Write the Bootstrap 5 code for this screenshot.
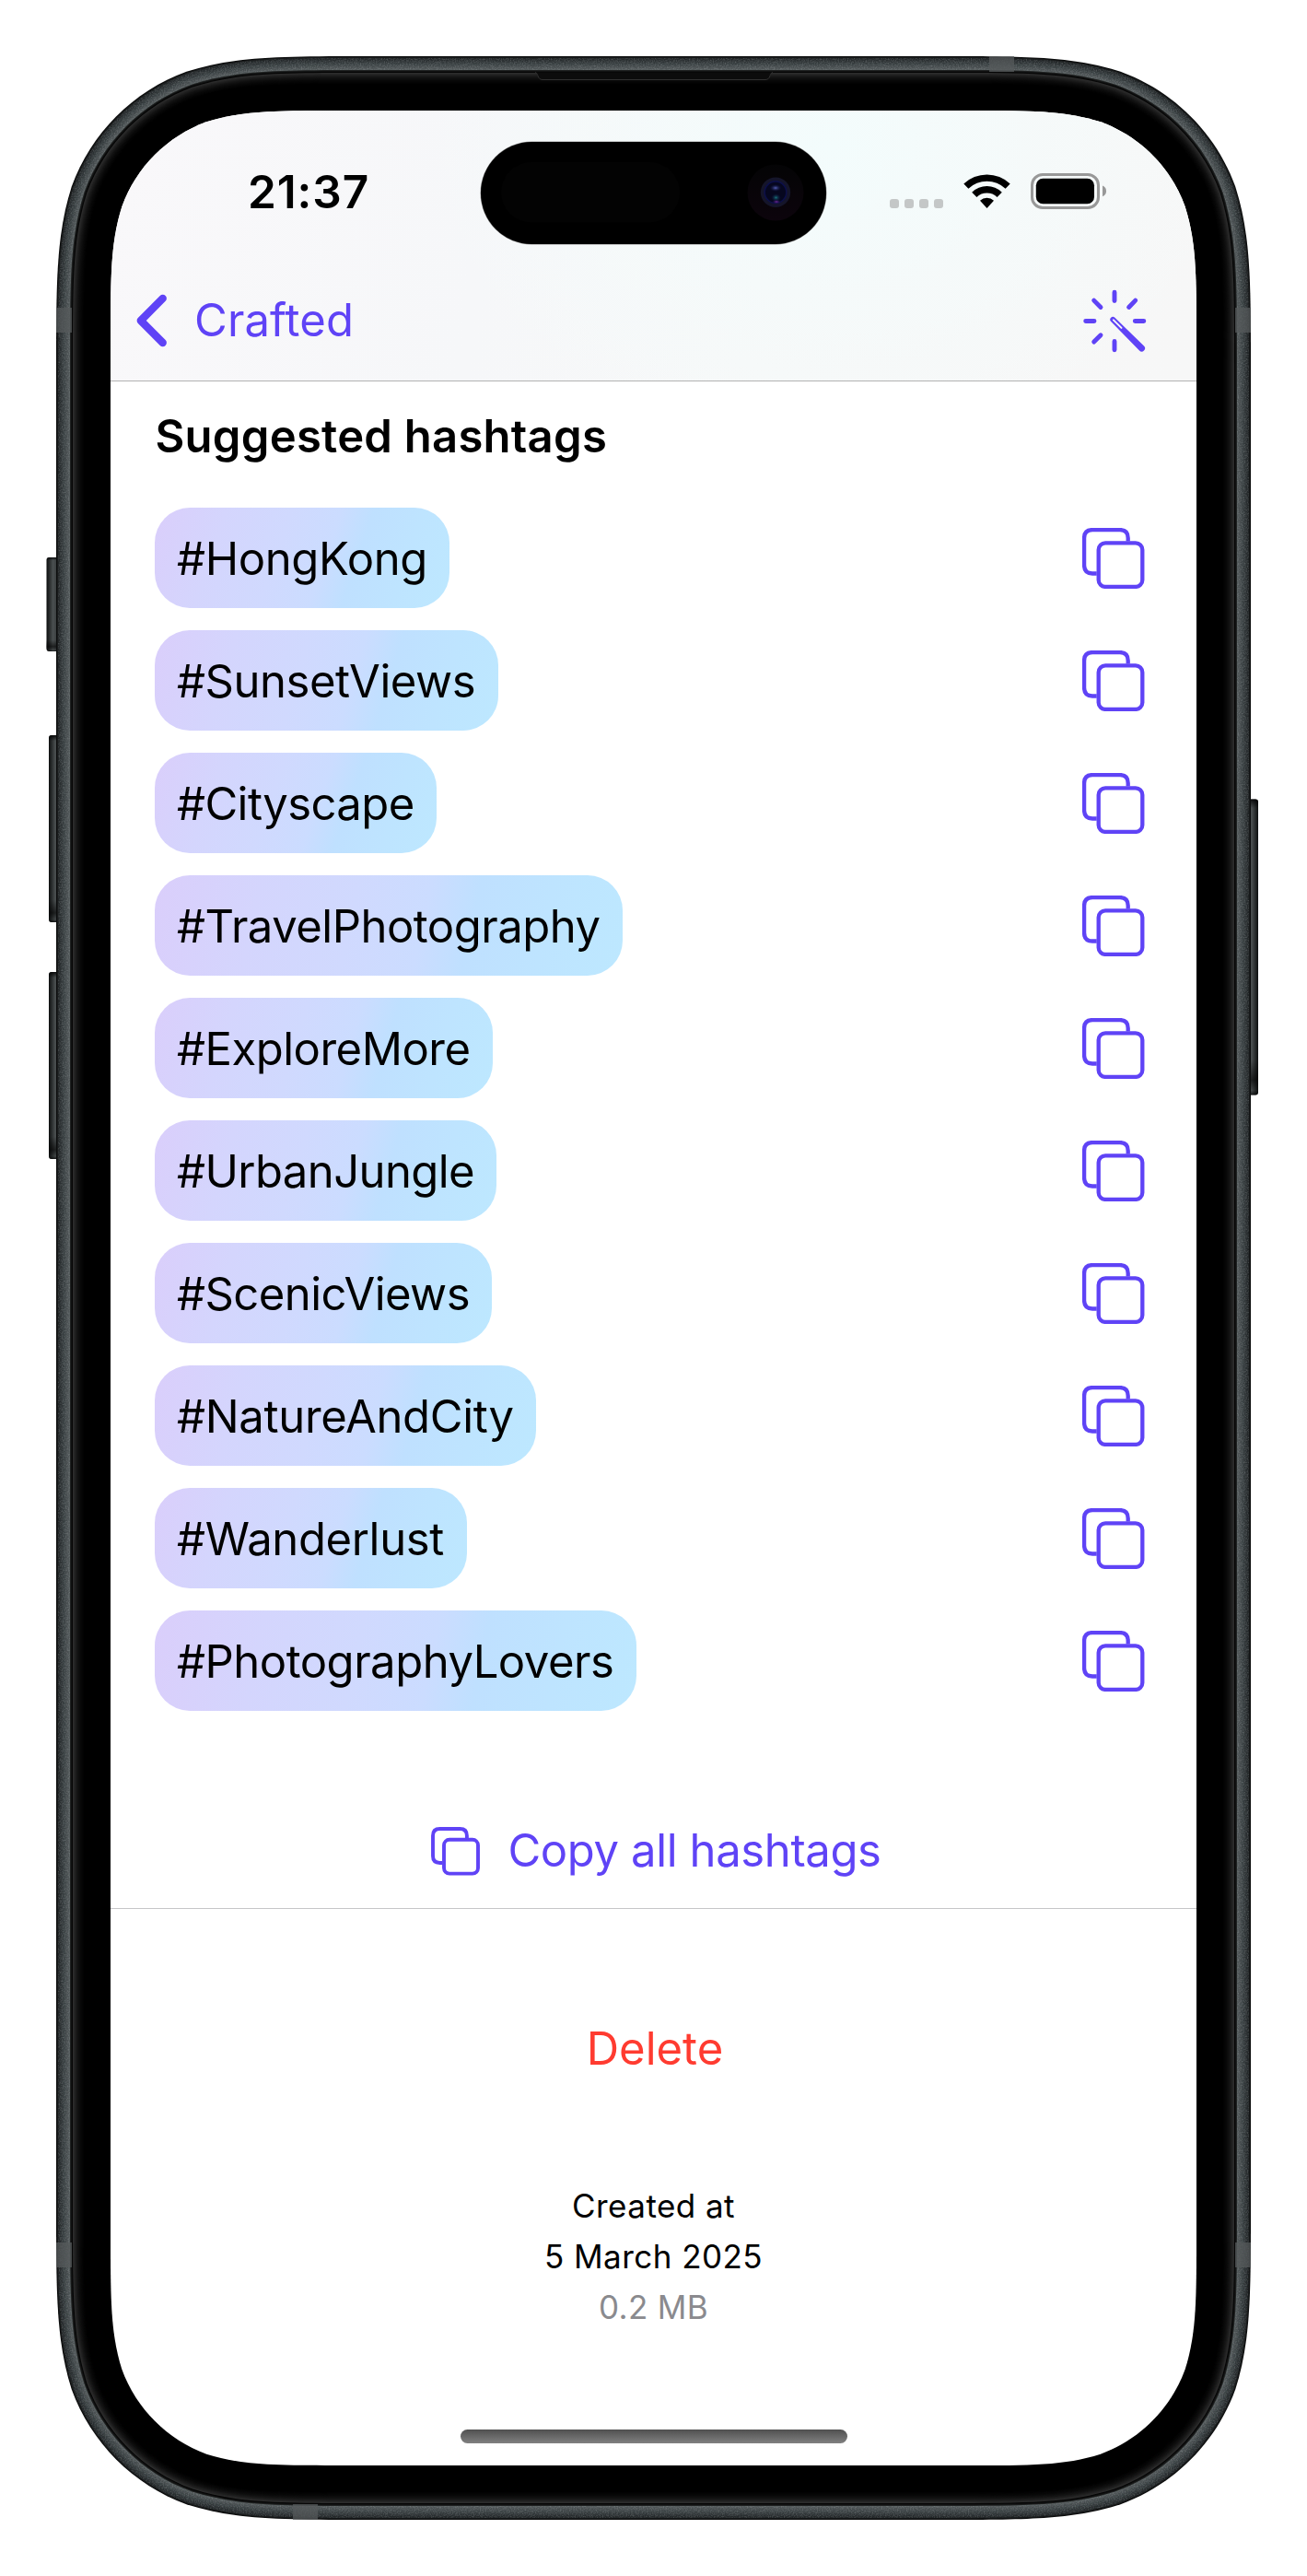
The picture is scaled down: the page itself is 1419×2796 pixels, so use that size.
<!DOCTYPE html>
<html lang="en">
<head>
<meta charset="utf-8">
<meta name="viewport" content="width=device-width, initial-scale=1">
<title>Suggested hashtags</title>
<link href="https://cdn.jsdelivr.net/npm/bootstrap@5.3.0/dist/css/bootstrap.min.css" rel="stylesheet">
<style>
  :root { --accent: #5f43f6; }
  body { font-family: Inter, "Liberation Sans", sans-serif; font-size: 49px; line-height: 60px; color: #000; background: #fff; }
  .device { width: 1419px; height: 2796px; padding: 120px 0 0 120px; }
  .device-frame { top: 0; left: 0; z-index: 0; }
  .phone-screen { width: 1179px; height: 2556px; z-index: 1; }
  .app-header {
    height: 294px; border-bottom: 1px solid #b2b2b2;
    background:
      radial-gradient(ellipse 440px 330px at 780px 40px, #f3fcfc 0%, rgba(244,251,251,.7) 45%, rgba(247,248,248,0) 100%),
      linear-gradient(100deg, #f9f8fa 0%, #f6f7f9 35%, #f7f8f8 60%, #f7f7f7 100%);
  }
  .status-bar { height: 176px; padding: 0 97px 0 149px; }
  .clock { font-size: 49.5px; font-weight: 600; letter-spacing: .9px; }
  .island { top: 34px; left: 402px; width: 375px; height: 110.5px; border-radius: 56px; box-shadow: 0 0 0 .5px #999; overflow: hidden; background: #000; }
  .nav-row { height: 117px; padding: 1px 54px 15px 26px; }
  .accent-text { color: var(--accent); }
  .back-label { margin-left: 28px; letter-spacing: .1px; }
  .section-title { font-size: 49px; font-weight: 600; line-height: 60px; letter-spacing: .25px; padding: 30px 0 47px 48.5px; }
  .tag-list { gap: 24px; padding: 0 56px 0 48px; }
  .tag-pill {
    width: calc(var(--w) * 1px); height: 109px; padding: 2px 0 0 24px; border-radius: 38px; letter-spacing: var(--ls);
    background: linear-gradient(var(--a), #dacefb 0%, #d4d5fd 22%, #d0d9fe 42%, #cbdcff 57%, #bfe0ff 67%, #bee4ff 82%, #bde8ff 100%);
  }
  .copy-all { margin-top: 122px; padding: 0 0 32px 6px; gap: 30px; border-bottom: 1px solid #c6c6c8; letter-spacing: -.38px; }
  .delete-row { margin-top: 122px; padding-left: 3px; color: #ff3b30; letter-spacing: 0; }
  .meta-block { margin-top: 113px; font-size: 35px; line-height: 55px; letter-spacing: .45px; }
  .meta-size { color: #8a8a8e; letter-spacing: .3px; }
  .home-bar { left: 380px; bottom: 24px; width: 420px; height: 15px; background: linear-gradient(#505050, #808080); }
</style>
<script src="https://cdn.jsdelivr.net/npm/bootstrap@5.3.0/dist/js/bootstrap.bundle.min.js"></script>
</head>
<body>
<svg class="d-none" aria-hidden="true">
  <symbol id="i-copy" viewBox="0 0 68 66">
    <path d="M15.7 49.5H11Q2.1 49.5 2.1 40.6V11Q2.1 2.1 11 2.1H41Q49.7 2.1 49.7 11V14.4" fill="none" stroke="currentColor" stroke-width="4.3"/>
    <rect x="17.7" y="16.4" width="47.6" height="47.5" rx="7.4" fill="none" stroke="currentColor" stroke-width="4.3"/>
  </symbol>
</svg>

<main class="device position-relative overflow-hidden">
  <svg class="device-frame position-absolute" width="1419" height="2796" viewBox="0 0 1419 2796" aria-hidden="true">
    <defs>
      <filter id="grain" x="0" y="0" width="100%" height="100%">
        <feTurbulence type="fractalNoise" baseFrequency=".7" numOctaves="2" seed="4"/>
        <feColorMatrix values="0 0 0 0 .62  0 0 0 0 .66  0 0 0 0 .67  1.6 0 0 0 -.62"/>
        <feComposite in2="SourceGraphic" operator="in"/>
      </filter>
      <linearGradient id="btn" x1="0" x2="1"><stop offset="0" stop-color="#0d0f0f"/><stop offset=".35" stop-color="#4a4f50"/><stop offset=".7" stop-color="#2f3334"/><stop offset="1" stop-color="#1a1c1d"/></linearGradient>
      <linearGradient id="btnR" x1="1" x2="0"><stop offset="0" stop-color="#0d0f0f"/><stop offset=".35" stop-color="#4a4f50"/><stop offset=".7" stop-color="#2f3334"/><stop offset="1" stop-color="#1a1c1d"/></linearGradient>
      <linearGradient id="btnEnds" x1="0" x2="0" y1="0" y2="1"><stop offset="0" stop-color="#000" stop-opacity=".85"/><stop offset=".03" stop-color="#000" stop-opacity="0"/><stop offset=".88" stop-color="#000" stop-opacity="0"/><stop offset=".95" stop-color="#000" stop-opacity=".6"/><stop offset=".985" stop-color="#000" stop-opacity=".1"/><stop offset="1" stop-color="#000" stop-opacity=".7"/></linearGradient>
    </defs>
    <g fill="url(#btn)">
      <rect x="50.5" y="605" width="20" height="102" rx="3"/>
      <rect x="53" y="798" width="20" height="203" rx="3"/>
      <rect x="53" y="1055" width="20" height="203" rx="3"/>
    </g>
    <rect x="1346" y="867.5" width="20" height="321" rx="3" fill="url(#btnR)"/>
    <g fill="url(#btnEnds)">
      <rect x="50.5" y="605" width="20" height="102" rx="3"/>
      <rect x="53" y="798" width="20" height="203" rx="3"/>
      <rect x="53" y="1055" width="20" height="203" rx="3"/>
      <rect x="1346" y="867.5" width="20" height="321" rx="3"/>
    </g>
    <g id="rings"></g>
    <g fill="#555a5b" fill-opacity=".75">
      <rect x="61" y="334" width="17" height="27"/><rect x="1341" y="334" width="17" height="27"/>
      <rect x="61" y="2434" width="17" height="27"/><rect x="1341" y="2434" width="17" height="27"/>
      <rect x="1074" y="61" width="27" height="17"/><rect x="318" y="2718" width="27" height="17"/>
    </g>
    <path d="M581 78.5C585 79.5 583 86.5 589 86.5H831C837 86.5 835 79.5 839 78.5" fill="#0c0c0c" stroke="#303030" stroke-width="1"/>
  </svg>

  <div class="phone-screen position-relative bg-white d-flex flex-column" id="screen">
    <header class="app-header">
      <div class="status-bar d-flex align-items-center justify-content-between">
        <span class="clock">21:37</span>
        <svg width="236" height="40" viewBox="966 188 236 40" aria-hidden="true">
          <g fill="#c4c7c7"><rect x="966" y="216" width="10" height="10" rx="3"/><rect x="982" y="216" width="10" height="10" rx="3"/><rect x="998" y="216" width="10" height="10" rx="3"/><rect x="1014" y="216" width="10" height="10" rx="3"/></g>
          <path d="M1046.3 199.6A36.5 36.5 0 0 1 1096.7 199.6L1091.6 204.8A29 29 0 0 0 1051.4 204.8Z"/>
          <path d="M1055.2 208.7A23.4 23.4 0 0 1 1087.8 208.7L1082.6 214A16 16 0 0 0 1060.4 214Z"/>
          <path d="M1064 217.8A11 11 0 0 1 1079 217.8L1071.5 226Z"/>
          <rect x="1120.5" y="189.5" width="72" height="36" rx="11.5" fill="none" stroke="#989898" stroke-width="3"/>
          <rect x="1124.8" y="193.8" width="63.2" height="27.4" rx="7.5"/>
          <path d="M1197 201.6Q1201 203.2 1201 207.4T1197 213.2Z" fill="#989898"/>
        </svg>
      </div>
      <div class="island position-absolute">
        <svg class="d-block" width="375" height="111" viewBox="522 154 375 111" aria-hidden="true">
          <defs>
            <linearGradient id="lensHalo" x1="0" x2="0" y1="0" y2="1"><stop offset="0" stop-color="#040405"/><stop offset="1" stop-color="#0c040c"/></linearGradient>
            <radialGradient id="lensBlue"><stop offset="0" stop-color="#5560b8"/><stop offset="1" stop-color="#0a0c38" stop-opacity="0"/></radialGradient>
            <radialGradient id="lensTeal"><stop offset="0" stop-color="#187078"/><stop offset="1" stop-color="#0a0c38" stop-opacity="0"/></radialGradient>
            <radialGradient id="lensPink"><stop offset="0" stop-color="#7a2aa8"/><stop offset="1" stop-color="#0a0c38" stop-opacity="0"/></radialGradient>
          </defs>
          <rect x="544" y="176" width="194" height="65.5" rx="32.7" fill="#030303"/>
          <circle cx="842" cy="209" r="30.5" fill="url(#lensHalo)"/>
          <circle cx="842" cy="208.7" r="16.2" fill="#15152a"/>
          <circle cx="842" cy="208.7" r="11.8" fill="#06071f" stroke="#0c0f48" stroke-width="1.6"/>
          <ellipse cx="842" cy="204" rx="6.5" ry="4" fill="url(#lensBlue)"/>
          <ellipse cx="842.5" cy="214.5" rx="5.5" ry="4.5" fill="url(#lensTeal)"/>
          <ellipse cx="843" cy="219" rx="5" ry="2.5" fill="url(#lensPink)"/>
        </svg>
      </div>
      <nav class="nav-row d-flex align-items-center justify-content-between accent-text">
        <a href="#" class="d-flex align-items-center text-decoration-none accent-text">
          <svg width="37" height="60" viewBox="146 316.7 37 60" aria-hidden="true"><path d="M176.7 322.6L152.8 346.7L176.7 370.7" fill="none" stroke="currentColor" stroke-width="8.4" stroke-linecap="round" stroke-linejoin="round"/></svg>
          <span class="back-label">Crafted</span>
        </a>
        <svg width="70" height="70" viewBox="1175 312.2 70 70" aria-hidden="true">
          <path d="M1210 316.5V325.7M1210 369.7V379M1178.7 347.7H1188M1232.3 347.7H1241.8M1187.7 325.3L1195 332.7M1232.7 325.3L1225.6 332.7M1195 363L1187.7 370.3" fill="none" stroke="currentColor" stroke-width="4.9" stroke-linecap="round"/>
          <path d="M1206.2 348.2A2.9 2.9 0 0 1 1210.4 343.9L1242 374.6A3.5 3.5 0 0 1 1237 379.6Z" fill="currentColor"/>
          <path d="M1208.9 346.6L1217.5 355.1" stroke="#f7f7f7" stroke-width="2" stroke-linecap="round"/>
        </svg>
      </nav>
    </header>

    <h1 class="section-title mb-0">Suggested hashtags</h1>

    <ul class="tag-list list-unstyled d-flex flex-column mb-0">
      <li class="d-flex align-items-center justify-content-between"><span class="tag-pill d-flex align-items-center text-nowrap" style="--w:320;--a:108.8deg;--ls:-.36px">#HongKong</span><svg class="accent-text" width="68" height="66"><use href="#i-copy"/></svg></li>
      <li class="d-flex align-items-center justify-content-between"><span class="tag-pill d-flex align-items-center text-nowrap" style="--w:372.5;--a:106.3deg;--ls:-.47px">#SunsetViews</span><svg class="accent-text" width="68" height="66"><use href="#i-copy"/></svg></li>
      <li class="d-flex align-items-center justify-content-between"><span class="tag-pill d-flex align-items-center text-nowrap" style="--w:306;--a:109.6deg;--ls:-.6px">#Cityscape</span><svg class="accent-text" width="68" height="66"><use href="#i-copy"/></svg></li>
      <li class="d-flex align-items-center justify-content-between"><span class="tag-pill d-flex align-items-center text-nowrap" style="--w:508;--a:102.1deg;--ls:-.5px">#TravelPhotography</span><svg class="accent-text" width="68" height="66"><use href="#i-copy"/></svg></li>
      <li class="d-flex align-items-center justify-content-between"><span class="tag-pill d-flex align-items-center text-nowrap" style="--w:367;--a:106.5deg;--ls:-.5px">#ExploreMore</span><svg class="accent-text" width="68" height="66"><use href="#i-copy"/></svg></li>
      <li class="d-flex align-items-center justify-content-between"><span class="tag-pill d-flex align-items-center text-nowrap" style="--w:371;--a:106.4deg;--ls:-.58px">#UrbanJungle</span><svg class="accent-text" width="68" height="66"><use href="#i-copy"/></svg></li>
      <li class="d-flex align-items-center justify-content-between"><span class="tag-pill d-flex align-items-center text-nowrap" style="--w:366;--a:106.6deg;--ls:-.56px">#ScenicViews</span><svg class="accent-text" width="68" height="66"><use href="#i-copy"/></svg></li>
      <li class="d-flex align-items-center justify-content-between"><span class="tag-pill d-flex align-items-center text-nowrap" style="--w:414;--a:104.7deg;--ls:-.3px">#NatureAndCity</span><svg class="accent-text" width="68" height="66"><use href="#i-copy"/></svg></li>
      <li class="d-flex align-items-center justify-content-between"><span class="tag-pill d-flex align-items-center text-nowrap" style="--w:339;--a:107.8deg;--ls:-.35px">#Wanderlust</span><svg class="accent-text" width="68" height="66"><use href="#i-copy"/></svg></li>
      <li class="d-flex align-items-center justify-content-between"><span class="tag-pill d-flex align-items-center text-nowrap" style="--w:523;--a:101.8deg;--ls:-.5px">#PhotographyLovers</span><svg class="accent-text" width="68" height="66"><use href="#i-copy"/></svg></li>
    </ul>

    <div class="copy-all d-flex justify-content-center align-items-center accent-text">
      <svg width="53" height="53" viewBox="0 0 53 53" aria-hidden="true">
        <path d="M12.2 39H9.5Q2 39 2 31.6V9.5Q2 2 9.5 2H31.4Q38.9 2 38.9 9.5V12" fill="none" stroke="currentColor" stroke-width="3.9"/>
        <rect x="14" y="13.8" width="37" height="36.8" rx="6" fill="none" stroke="currentColor" stroke-width="3.9"/>
      </svg>
      <span>Copy all hashtags</span>
    </div>

    <div class="delete-row text-center">Delete</div>

    <div class="meta-block text-center">
      <div>Created at</div>
      <div>5 March 2025</div>
      <div class="meta-size">0.2 MB</div>
    </div>

    <div class="home-bar position-absolute rounded-pill"></div>
  </div>
</main>

<script>
  // Rounded rectangle whose corners ease into the straight edges (continuous curvature).
  function squircle(x, y, w, h, r) {
    const k = [1.528665, 1.08849296, 0.86840694, 0.63149379, 0.37282383, 0.16905956, 0.07491139].map(v => v * r);
    const corner = (cx, cy, sx, sy, flip) => {
      const p = (a, b) => flip ? `${cx + sx * b} ${cy + sy * a}` : `${cx + sx * a} ${cy + sy * b}`;
      return `L${p(k[0], 0)}C${p(k[1], 0)} ${p(k[2], 0)} ${p(k[3], k[6])}C${p(k[4], k[5])} ${p(k[5], k[4])} ${p(k[6], k[3])}C${p(0, k[2])} ${p(0, k[1])} ${p(0, k[0])}`;
    };
    const d = corner(x + w, y, -1, 1, false) + corner(x + w, y + h, -1, -1, true) + corner(x, y + h, 1, -1, false) + corner(x, y, 1, 1, true);
    return 'M' + d.slice(1) + 'Z';
  }
  // Metal band and glass edge, one colour per pixel of depth.
  const shades = ['#0c0d0d','#191b1c','#202425','#25292b','#292e30','#2d3234','#313739','#353b3d','#394042','#3d4446','#42484a','#464c4e','#4a5052','#4f5557','#535a5b','#1f2121','#111212','#050505','#2c2c2c','#262626','#202020','#1b1b1b','#161616','#121212','#0e0e0e','#0b0b0b','#080808','#060606','#040404','#020202','#000'];
  const ring = d => squircle(61 + d, 61 + d, 1297 - 2 * d, 2674 - 2 * d, 224 - d);
  let out = '';
  shades.forEach((c, d) => {
    out += `<path d="${ring(d)}" fill="${c}"/>`;
    if (d === 14) out += `<path d="${ring(2)}${ring(15)}" fill-rule="evenodd" filter="url(#grain)" opacity=".3"/>`;
  });
  document.getElementById('rings').innerHTML = out;
  document.getElementById('screen').style.clipPath = `path("${squircle(0, 0, 1179, 2556, 165)}")`;
</script>
</body>
</html>
